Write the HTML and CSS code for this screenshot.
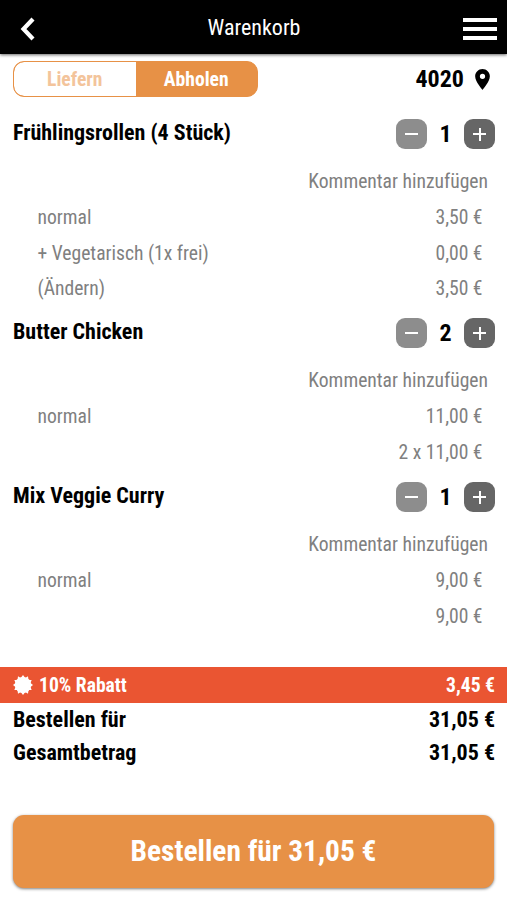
FILE: index.html
```html
<!DOCTYPE html>
<html lang="de">
<head>
<meta charset="utf-8">
<title>Warenkorb</title>
<link rel="stylesheet" href="styles.css">
</head>
<body>
<header class="bar">
  <svg class="back" viewBox="0 0 16 24"><path d="M13 2 3.500 12l9.500 10" fill="none" stroke="#fff" stroke-width="4.200"/></svg>
  <h1 class="bar-title"><span class="t">Warenkorb</span></h1>
  <div class="menu"><i></i><i></i><i></i></div>
</header>
<main>
  <div class="top">
    <div class="toggle"><div class="opt"><span class="t">Liefern</span></div><div class="opt on"><span class="t">Abholen</span></div></div>
    <div class="zip"><span class="t">4020</span><svg class="pin" viewBox="5 2 14 20"><path d="M12 2C8.1 2 5 5.1 5 9c0 5.2 7 13 7 13s7-7.800 7-13c0-3.900-3.100-7-7-7zm0 9.500a2.500 2.500 0 1 1 0-5 2.500 2.500 0 0 1 0 5z"/></svg></div>
  </div>
  <section class="item">
    <div class="head"><h2 class="name"><span class="t">Frühlingsrollen (4 Stück)</span></h2><div class="stepper"><button class="step minus"></button><b class="t">1</b><button class="step plus"></button></div></div>
    <div class="comment"><span class="t">Kommentar hinzufügen</span></div>
    <div class="line"><span class="t">normal</span><span class="t">3,50 €</span></div>
    <div class="line"><span class="t">+ Vegetarisch (1x frei)</span><span class="t">0,00 €</span></div>
    <div class="line"><span class="t">(Ändern)</span><span class="t">3,50 €</span></div>
  </section>
  <section class="item">
    <div class="head"><h2 class="name"><span class="t">Butter Chicken</span></h2><div class="stepper"><button class="step minus"></button><b class="t">2</b><button class="step plus"></button></div></div>
    <div class="comment"><span class="t">Kommentar hinzufügen</span></div>
    <div class="line"><span class="t">normal</span><span class="t">11,00 €</span></div>
    <div class="line"><span></span><span class="t">2 x 11,00 €</span></div>
  </section>
  <section class="item">
    <div class="head"><h2 class="name"><span class="t">Mix Veggie Curry</span></h2><div class="stepper"><button class="step minus"></button><b class="t">1</b><button class="step plus"></button></div></div>
    <div class="comment"><span class="t">Kommentar hinzufügen</span></div>
    <div class="line"><span class="t">normal</span><span class="t">9,00 €</span></div>
    <div class="line"><span></span><span class="t">9,00 €</span></div>
  </section>
</main>
<footer>
  <div class="discount"><svg class="badge" viewBox="-10 -10 20 20"><circle r="8"/><path d="M0-10 2.300-7 5-8.660 5.500-5 8.660-5 7.500-2 10 0 7.500 2 8.660 5 5.500 5 5 8.660 2.300 7 0 10-2.300 7-5 8.660-5.500 5-8.660 5-7.500 2-10 0-7.500-2-8.660-5-5.500-5-5-8.660-2.300-7z"/></svg><span class="t">10% Rabatt</span><span class="t amount">3,45 €</span></div>
  <div class="sum"><span class="t">Bestellen für</span><span class="t">31,05 €</span></div>
  <div class="sum"><span class="t">Gesamtbetrag</span><span class="t">31,05 €</span></div>
  <button class="order"><span class="t">Bestellen für 31,05 €</span></button>
</footer>
</body>
</html>
```
FILE: styles.css
```css
* { box-sizing: border-box; }
body {
  margin: 0;
  height: 900px;
  overflow: hidden;
  background: #fff;
  color: #000;
  font-family: "Roboto Condensed", Roboto, sans-serif;
  font-stretch: 75%;
  font-size: 19.600px;
}
h1, h2 { margin: 0; }
button { border: 0; padding: 0; font: inherit; }
.t { white-space: nowrap; }
.bar {
  height: 54px;
  padding: 0 10px 0 20px;
  display: grid;
  grid-template-columns: 34px 1fr 34px;
  align-items: center;
  background: #000;
  color: #fff;
  box-shadow: 0 1px 3px rgba(0, 0, 0, .6);
}
.back { width: 16px; height: 24px; margin-top: 2px; }
.bar-title { font-size: 22px; font-weight: 400; text-align: center; line-height: 56px; padding-right: 9px; }
.menu { display: grid; gap: 5px; margin-top: 2px; }
.menu i { height: 4px; background: #fff; }
.top { display: flex; justify-content: space-between; height: 36px; margin: 7px 17px 0 13px; }
.toggle { display: flex; width: 245px; border: 1px solid #e79146; border-radius: 11px; overflow: hidden; background: #e79146; }
.opt { flex: 1; background: #fff; color: #f3c49b; font-weight: 700; text-align: center; line-height: 35px; }
.opt:first-child { border-radius: 10px 0 0 10px; }
.opt.on { background: #e79146; color: #fff; }
.zip { display: flex; align-items: center; gap: 11px; font-size: 24px; font-weight: 700; }
.pin { width: 15px; height: 21px; }
.item { height: 164px; }
.item:nth-of-type(1) { height: 199px; margin-top: 22px; }
.head { display: flex; justify-content: space-between; height: 30px; padding: 0 12px 0 13px; }
.name { font-size: 22px; font-weight: 700; line-height: 27px; }
.stepper { display: grid; grid-template-columns: 31px 37px 31px; text-align: center; font-size: 24px; line-height: 31px; }
.step { height: 30px; border-radius: 9px; background: linear-gradient(#fff, #fff) center / 13px 2px no-repeat #8d8d8d; }
.step.plus { background: linear-gradient(#fff, #fff) center / 13px 2px no-repeat, linear-gradient(#fff, #fff) center / 2px 13px no-repeat, #666; }
.comment { height: 36px; margin-top: 14px; padding-right: 19px; text-align: right; line-height: 38px; color: #808080; }
.line { display: flex; justify-content: space-between; height: 35.500px; line-height: 38px; padding: 0 24.500px 0 37.500px; color: #808080; }
footer { margin-top: 21px; font-weight: 700; }
.discount { display: flex; align-items: center; height: 36px; padding: 0 12px 0 13px; background: #ea5532; color: #fff; }
.badge { width: 20px; height: 20px; fill: #fff; margin-right: 6px; }
.amount { margin-left: auto; }
.sum { display: flex; justify-content: space-between; height: 33px; line-height: 33px; padding: 0 12px 0 13px; font-size: 22px; }
.order {
  display: block;
  width: 481px;
  height: 73px;
  margin: 46px 0 0 13px;
  padding-bottom: 2px;
  border-radius: 11px;
  background: #e79146;
  color: #fff;
  font-size: 29.400px;
  box-shadow: 0 1px 3px rgba(0, 0, 0, .5);
}
```
